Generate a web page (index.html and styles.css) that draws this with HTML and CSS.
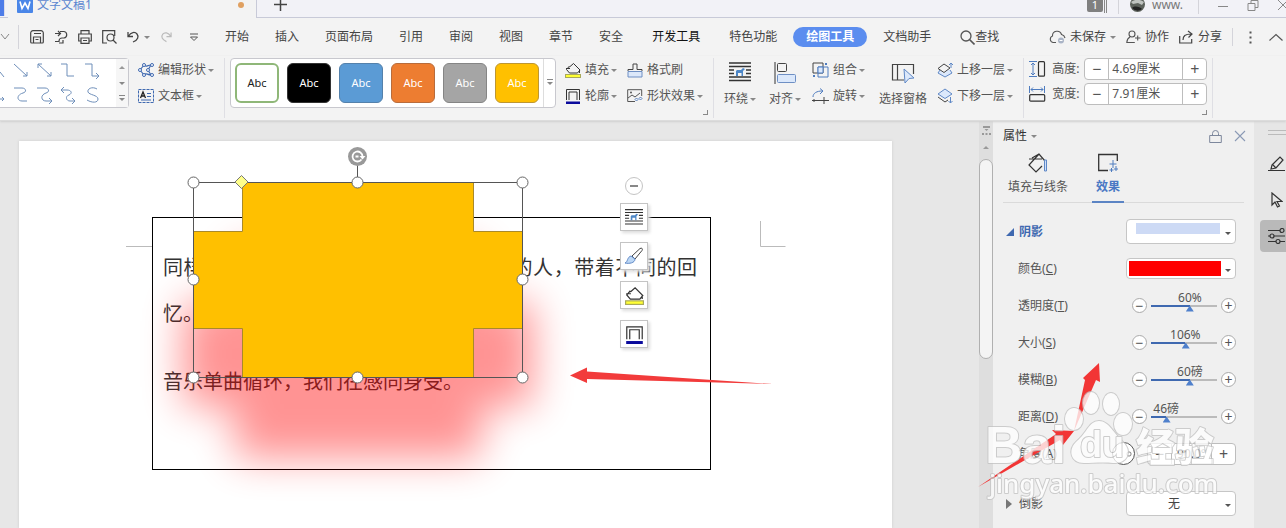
FILE: index.html
```html
<!DOCTYPE html>
<html lang="zh-CN">
<head>
<meta charset="utf-8">
<title>文字文稿1</title>
<link rel="stylesheet" href="styles.css">
</head>
<body>
<svg class="defs" aria-hidden="true">
  <symbol id="i-fill" viewBox="0 0 16 16"><path d="M4.500 4 1.500 7.500l3 3.500h8L15 8 8.500 1.500 4.500 5M1 6.500h4M14.500 8v3" fill="none" stroke="#333"/><rect x=".5" y="12.500" width="15" height="3" fill="#ff3" stroke="#a9a95a"/></symbol>
  <symbol id="i-line" viewBox="0 0 16 16"><path d="M1.500 12V1.500h13V12M4 12V4h8v8" fill="none" stroke="#333"/><path d="M1 13.500h14v2.500H1z" fill="#0a0a9c"/></symbol>
  <symbol id="i-wrap" viewBox="0 0 22 20"><path d="M0 1h22M0 4.500h22M0 8h5M17 8h5M0 11.500h5M17 11.500h5M0 15h22M0 18.500h22" stroke="#333" stroke-width="1.300"/><path d="M7 14v-5l1-1h4l2-2 2 1-2 2v5h-1.500v-3H9v3z" fill="#4d86c6"/></symbol>
</svg>

<header class="titlebar">
  <div class="home-edge"></div>
  <div class="doc-tab">
    <svg width="16" height="16" viewBox="0 0 16 16"><rect width="16" height="16" rx="1" fill="#4a86e8"/><path d="M3 4.500 5 11.500 8 6l3 5.500 2-7" fill="none" stroke="#fff" stroke-width="1.600"/></svg>
    <span>文字文稿1</span><i class="unsaved"></i>
  </div>
  <button class="new-tab" aria-label="新建"><svg width="13" height="13" viewBox="0 0 13 13"><path d="M6.500 0v13M0 6.500h13" stroke="#444" stroke-width="1.500"/></svg></button>
  <div class="title-right">
    <span class="count">1</span><i class="bars"></i><i class="vsep"></i>
    <svg class="avatar" width="15" height="15" viewBox="0 0 15 15"><circle cx="7.500" cy="7.500" r="7.500" fill="#5d625c"/><path d="M1 5c4-3 9-3 13 0l-2 3-4-2-5 1z" fill="#bfc3c0"/><path d="M2 11c3-3 8-1 10 1a7 7 0 0 1-10-1z" fill="#222"/></svg>
    <span class="user">www.</span><i class="vsep"></i>
    <button class="win" aria-label="最小化"><svg width="12" height="12" viewBox="0 0 12 12"><path d="M1 7.500h10" stroke="#888"/></svg></button>
    <button class="win" aria-label="还原"><svg width="12" height="12" viewBox="0 0 12 12"><path d="M1 4.500h7v7H1zM4 4V1.500h7v7H8" fill="none" stroke="#888"/></svg></button>
    <button class="win" aria-label="关闭"><svg width="12" height="12" viewBox="0 0 12 12"><path d="m1 1 10 10M11 1 1 11" stroke="#888"/></svg></button>
  </div>
</header>

<nav class="menubar">
  <div class="quick">
    <svg width="10" height="8" viewBox="0 0 10 8"><path d="m1 1 4 5 4-5" fill="none" stroke="#888"/></svg>
    <i class="vsep tall"></i>
    <button aria-label="保存"><svg width="14" height="14" viewBox="0 0 14 14"><path d="M.700 3V12a1 1 0 0 0 1 1H12.300a1 1 0 0 0 1-1V3a2.300 2.300 0 0 0-2.300-2.300H3a2.300 2.300 0 0 0-2.300 2.300zM3.500 13V7h7v6M4 3.500h7M5.500 9.500h3" fill="none" stroke="#444" stroke-width="1.200"/></svg></button>
    <button aria-label="输出"><svg width="14" height="14" viewBox="0 0 14 14"><path d="M1 3.500h6M4 1l2.500 2.500L4 6M6 1.500h4a3.300 3.300 0 0 1 0 6.500H8a3 3 0 0 0-3 3v.500H1M5 13h4V10" fill="none" stroke="#444" stroke-width="1.200"/></svg></button>
    <button aria-label="打印"><svg width="14" height="14" viewBox="0 0 14 14"><path d="M3 4V.700h8V4M3 11H.700V4h12.600v7H11M3 8h8v5.300H3zM5 10.500h4" fill="none" stroke="#444" stroke-width="1.200"/></svg></button>
    <button aria-label="打印预览"><svg width="15" height="14" viewBox="0 0 15 14"><path d="M5 13H.700V.700h12V6" fill="none" stroke="#444" stroke-width="1.200"/><circle cx="8.500" cy="7.500" r="3.500" fill="none" stroke="#444" stroke-width="1.200"/><path d="m11 10 3.500 3.500" stroke="#444" stroke-width="1.300"/></svg></button>
    <button class="with-caret" aria-label="撤销"><svg width="13" height="12" viewBox="0 0 13 12"><path d="M1 1v4.500h5M1.500 5C4 1 8 .500 10 3s1 6-4 8" fill="none" stroke="#444" stroke-width="1.300"/></svg><i class="caret"></i></button>
    <button aria-label="恢复"><svg width="12" height="12" viewBox="0 0 13 12"><path d="M12 1v4.500H7M11.500 5C9 1 5 .500 3 3s-1 6 4 8" fill="none" stroke="#bbb" stroke-width="1.300"/></svg></button>
    <button aria-label="更多"><svg width="8" height="9" viewBox="0 0 8 9"><path d="M0 1h8M.500 4 4 7.500 7.500 4z" fill="none" stroke="#555"/></svg></button>
  </div>
  <div class="menus">
    <button>开始</button><button>插入</button><button>页面布局</button><button>引用</button><button>审阅</button><button>视图</button><button>章节</button><button>安全</button>
  </div>
  <div class="menus wide">
    <button class="dark">开发工具</button><button>特色功能</button><button class="pill">绘图工具</button><button>文档助手</button>
    <button class="find"><svg width="15" height="15" viewBox="0 0 15 15"><circle cx="6" cy="6" r="5" fill="none" stroke="#555" stroke-width="1.300"/><path d="m9.500 9.500 5 5" stroke="#555" stroke-width="1.600"/></svg>查找</button>
  </div>
  <div class="share">
    <button><svg width="17" height="14" viewBox="0 0 17 14"><path d="M7 12.500H4A3.400 3.400 0 0 1 3.500 6a4.600 4.600 0 0 1 9-1.500c2 .500 3 1.500 3.500 3.500" fill="none" stroke="#555" stroke-width="1.100"/><circle cx="12" cy="10.500" r="3" fill="#aab4c6"/><path d="M10.500 10.500h3" stroke="#fff"/></svg>未保存<i class="caret"></i></button>
    <button><svg width="15" height="14" viewBox="0 0 15 14"><circle cx="6" cy="4" r="3" fill="none" stroke="#555" stroke-width="1.100"/><path d="M4 7C2 8 1 9 .800 12.500h8M9 8h5.500M11.700 5.500v5" fill="none" stroke="#555" stroke-width="1.100"/></svg>协作</button>
    <button><svg width="15" height="14" viewBox="0 0 15 14"><path d="M.700 6v7h12V9M4 10c0-4 2-6 8-6M9 1l4 3-3.500 3.500" fill="none" stroke="#444" stroke-width="1.200"/></svg>分享</button>
    <i class="vsep"></i>
    <button aria-label="更多选项"><svg width="3" height="13" viewBox="0 0 3 13"><path d="M.500.500h2v2h-2zM.500 5.500h2v2h-2zM.500 10.500h2v2h-2z" fill="#555"/></svg></button>
    <button class="collapse" aria-label="收起"><svg width="14" height="8" viewBox="0 0 14 8"><path d="m.500 7.500 6.500-6 6.500 6" fill="none" stroke="#555" stroke-width="1.200"/></svg></button>
  </div>
</nav>

<section class="ribbon">
  <div class="gallery lines">
    <svg width="116" height="48" viewBox="0 0 116 48" fill="none" stroke="#6f8fba"><path d="M0 13l4 5M0 40h4m-2-2 2 2-2 2M14 5l13 12m-4 0h4v-4M38 5l13 12m-4 0h4v-4M38 9V5h4M61 5h6v12h7M85 5h7v12h7m-3-3 3 3-3 3M14 29h8c4 0 5 4 1 5-7 2-6 8-1 8h5M37 29h8c4 0 5 4 1 5-6 2-5 8 0 8h6m-3-3 3 3-3 3M62 31h5c4 0 6 3 2 5-4 1-3 6 1 6h5m-3-3 3 3-3 3M64 28l-3 3 3 3M97 30c-5-3-10 0-9 3s10 3 10 7-6 4-11 1"/></svg>
    <div class="gallery-nav"><i class="caret up"></i><i class="caret"></i><i class="caret lined"></i></div>
  </div>
  <div class="rows edit">
    <button><svg width="16" height="14" viewBox="0 0 16 14"><path d="M2 7 6 2M2 7l4 5M6 2c2 3 3 0 7 0M6 12c2-3 3 0 7 0M13 2l-3 5 3 5" fill="none" stroke="#3f69b0" stroke-width="1.200"/><g fill="#fff" stroke="#3f69b0"><circle cx="2" cy="7" r="1.500"/><circle cx="6" cy="2" r="1.500"/><circle cx="6" cy="12" r="1.500"/><circle cx="14" cy="2" r="1.500"/><circle cx="14" cy="12" r="1.500"/><circle cx="10" cy="7" r="1.500"/></g></svg>编辑形状<i class="caret"></i></button>
    <button><svg width="16" height="14" viewBox="0 0 16 14"><rect x=".500" y=".500" width="15" height="13" fill="none" stroke="#3f69b0" stroke-dasharray="3 1"/><path d="m2.500 9 2.500-6 2.500 6M3.500 7h3" fill="none" stroke="#222" stroke-width="1.300"/><path d="M9 4.500h4M9 7.500h4M3 11h10" stroke="#3f69b0"/></svg>文本框<i class="caret"></i></button>
  </div>
  <i class="rsep"></i>
  <div class="gallery styles">
    <div class="swatches">
      <button class="sw outline">Abc</button><button class="sw black">Abc</button><button class="sw blue">Abc</button><button class="sw orange">Abc</button><button class="sw gray">Abc</button><button class="sw gold">Abc</button>
    </div>
    <div class="more"><i class="caret lined"></i></div>
  </div>
  <div class="rows fills">
    <button><svg width="16" height="16"><use href="#i-fill"/></svg>填充<i class="caret"></i></button>
    <button><svg width="16" height="16"><use href="#i-line"/></svg>轮廓<i class="caret"></i></button>
  </div>
  <div class="rows effects">
    <button><svg width="16" height="15" viewBox="0 0 16 15"><path d="M1 8.500h14v5.500H1z" fill="#dce8fa" stroke="#6e8fc4"/><path d="M1 8V6.500h5V1h4v5.500h5V8" fill="none" stroke="#444"/></svg>格式刷</button>
    <button><svg width="16" height="14" viewBox="0 0 16 14"><path d="M8 12.500H.700V.700h14V7M1 9l4-3 3 2 5-4" fill="none" stroke="#555"/><circle cx="4" cy="3.500" r="1" fill="#555"/><path d="m9.500 9 1.500 1.500L9.500 12 8 10.500zM13.500 8 15 9.500 13.500 11 12 9.500z" fill="none" stroke="#5a82c0"/></svg>形状效果<i class="caret"></i></button>
  </div>
  <i class="corner"></i>
  <i class="rsep"></i>
  <button class="big"><svg width="22" height="20"><use href="#i-wrap"/></svg><span>环绕<i class="caret"></i></span></button>
  <button class="big"><svg width="22" height="22" viewBox="0 0 22 22"><path d="M1 0v22" stroke="#333"/><rect x="3.500" y="1.500" width="9" height="8" rx="1" fill="none" stroke="#444"/><rect x="3.500" y="12.500" width="18" height="8" rx="1" fill="#dbe8fb" stroke="#6e8fc4"/></svg><span>对齐<i class="caret"></i></span></button>
  <div class="rows group">
    <button><svg width="17" height="16" viewBox="0 0 17 16"><path d="M1 1h10v10H1z" fill="none" stroke="#444"/><path d="M6 5h10v10H6z" fill="none" stroke="#4f7cbf"/><path d="M6 5h5v6H6z" fill="#dbe8fb" stroke="#4f7cbf"/><path d="M13 1h2v2h-2zM1 13h2v2H1z" fill="#4f7cbf"/></svg>组合<i class="caret"></i></button>
    <button><svg width="17" height="16" viewBox="0 0 17 16"><path d="M1 9c0-4 4-6 9-6M8 .500 11 3 8 6" fill="none" stroke="#4f7cbf"/><path d="M0 12.500h17M12 9v7M2 11v3" stroke="#444"/></svg>旋转<i class="caret"></i></button>
  </div>
  <button class="big pane"><svg width="24" height="22" viewBox="0 0 24 22"><path d="M13 18H1.500V2.500h21V12M6.500 3v15" fill="none" stroke="#444" stroke-width="1.200"/><path d="m13 7 10 9-5 .500L14 21z" fill="#dbe8fb" stroke="#5f88c6"/></svg><span>选择窗格</span></button>
  <div class="rows layer">
    <button><svg width="16" height="16" viewBox="0 0 16 16"><path d="m3 8-2 3 7 4 7-4-2-3" fill="#dbe8fb" stroke="#5f88c6"/><path d="m7 2 6 4-6 4.500L1 6.500z" fill="#f3f3f3" stroke="#444"/><path d="M14 6V1m-2 2 2-2 2 2" fill="none" stroke="#5f88c6"/></svg>上移一层<i class="caret"></i></button>
    <button><svg width="16" height="16" viewBox="0 0 16 16"><path d="m1 9 7 5 3-2" fill="none" stroke="#444"/><path d="m8 1 7 5-7 4.500L1 6z" fill="#dbe8fb" stroke="#5f88c6"/><path d="M13.500 9v6m-2-2 2 2 2-2" fill="none" stroke="#5f88c6"/></svg>下移一层<i class="caret"></i></button>
  </div>
  <i class="rsep"></i>
  <div class="sizes">
    <label for="h"><svg width="17" height="16" viewBox="0 0 17 16"><path d="M0 .500h8M0 15.500h8M4 2v12M2 4l2-2 2 2M2 12l2 2 2-2" fill="none" stroke="#4f7cbf"/><rect x="9.500" y=".700" width="6" height="14.500" rx="1" fill="none" stroke="#333" stroke-width="1.200"/></svg>高度:</label>
    <div class="spin"><button aria-label="减小高度">−</button><input id="h" value="4.69厘米"><button aria-label="增大高度">+</button></div>
    <label for="w"><svg width="17" height="16" viewBox="0 0 17 16"><path d="M.500 0v7M15.500 0v7M2 3.500h12M4 1.500l-2 2 2 2M12 1.500l2 2-2 2" fill="none" stroke="#4f7cbf"/><rect x=".700" y="8.700" width="15" height="6.500" rx="1" fill="none" stroke="#333" stroke-width="1.200"/></svg>宽度:</label>
    <div class="spin"><button aria-label="减小宽度">−</button><input id="w" value="7.91厘米"><button aria-label="增大宽度">+</button></div>
    <i class="corner"></i>
  </div>
  <i class="rsep last"></i>
</section>

<main class="workspace">
  <div class="canvas">
    <article class="page">
      <div class="textbox">
        <p>同样的旋律，同样的歌词，只是不一样的人，带着不同的回忆。</p>
        <p>音乐单曲循环，我们在感同身受。</p>
      </div>
      <svg class="drawing" width="873" height="387" viewBox="19 141 873 387">
        <defs><filter id="soft" x="-30%" y="-40%" width="160%" height="180%"><feGaussianBlur stdDeviation="20"/></filter></defs>
        <path d="M126 246.500h26M760.500 221v25.500h25" fill="none" stroke="#bbb"/>
        <path d="M235 250h246v52h52v104h-52v52H235v-52h-52V302h52z" fill="#f00" opacity=".42" filter="url(#soft)"/>
        <path d="M242.500 182.500h231v49h49v97h-49v49h-231v-49h-49v-97h49z" fill="#ffc000" stroke="#a98a2a"/>
        <path d="M193.500 182.500h329v195h-329zM357.500 165v17" fill="none" stroke="#555"/>
        <circle cx="357.500" cy="156.500" r="9.500" fill="#999"/>
        <path d="M361.500 159.500a5 5 0 1 1 1-3M355.500 156.500h3" fill="none" stroke="#fff" stroke-width="1.800"/>
        <path d="M359.500 156h6l-3 3.500z" fill="#fff"/>
        <path d="m241.500 175.500 6.500 6.500-6.500 6.500-6.500-6.500z" fill="#ffff8a" stroke="#777"/>
        <g fill="#fff" stroke="#666"><circle cx="193.500" cy="182.500" r="5.500"/><circle cx="357.500" cy="182.500" r="5.500"/><circle cx="522.500" cy="182.500" r="5.500"/><circle cx="193.500" cy="279.500" r="5.500"/><circle cx="522.500" cy="279.500" r="5.500"/><circle cx="193.500" cy="377.500" r="5.500"/><circle cx="357.500" cy="377.500" r="5.500"/><circle cx="522.500" cy="377.500" r="5.500"/></g>
        <path d="m570 375.500 17-8v4l186 12.500-186-5v4z" fill="#f23b3b"/>
      </svg>
      <div class="float-tools">
        <button class="round" aria-label="收起"><svg width="8" height="2"><path d="M0 1h8" stroke="#888" stroke-width="2"/></svg></button>
        <button aria-label="环绕"><svg width="18" height="18"><use href="#i-wrap"/></svg></button>
        <button aria-label="格式刷"><svg width="20" height="18" viewBox="0 0 20 18"><path d="M8 9 16 1.500c2-1 3 .500 2 2L11 12z" fill="#fff" stroke="#444"/><path d="M1 16c3-1 2-6 6-7l4 3c0 4-6 5-10 4z" fill="#bcd7f5" stroke="#5f88c6"/></svg></button>
        <button aria-label="填充"><svg width="19" height="19"><use href="#i-fill"/></svg></button>
        <button aria-label="轮廓"><svg width="19" height="19"><use href="#i-line"/></svg></button>
      </div>
    </article>
  </div>
  <div class="scroll"><svg width="9" height="10" viewBox="0 0 9 10"><path d="M1 0h7v2H1zM2.500 3h4L4.500 5zM0 7h2v2H0zM3.500 7h2v2h-2zM7 7h2v2H7z" fill="#999"/></svg><i class="caret up"></i><div class="thumb"></div></div>

  <aside class="panel">
    <div class="panel-head"><strong>属性</strong><i class="caret"></i>
      <svg width="13" height="13" viewBox="0 0 13 13"><path d="M.700 5.500h11.600v7H.700zM3.500 5V3.500a3 3 0 0 1 6 0V5" fill="none" stroke="#7d879c"/></svg>
      <svg width="12" height="12" viewBox="0 0 12 12"><path d="m1 1 10 10M11 1 1 11" stroke="#8b9ab5" stroke-width="1.100"/></svg>
    </div>
    <div class="panel-tabs">
      <button><svg width="20" height="20" viewBox="0 0 20 20"><path d="M4 5 11 1l6 7M11 1 1 12l7 7 6-6M1 6h13" fill="none" stroke="#333" stroke-width="1.200"/><path d="M16.500 7h2v11h-2z" fill="#cfe0fa" stroke="#5f88c6"/></svg><span>填充与线条</span></button>
      <button class="active"><svg width="20" height="20" viewBox="0 0 20 20"><path d="M10 17.500H.700V1.500h18.600V8" fill="none" stroke="#333" stroke-width="1.300"/><path d="M15 7v8M11.500 11h7M13.500 15v4M11.500 17h4M18 13v5M16 16h4" stroke="#4f7cbf"/></svg><span>效果</span></button>
    </div>
    <div class="prop section"><label for="shadow"><i class="open"></i>阴影</label><div class="pick"><select id="shadow" class="shadow"><option></option></select></div></div>
    <div class="prop"><label for="color">颜色(<u>C</u>)</label><div class="pick small"><select id="color" class="color"><option></option></select></div></div>
    <div class="prop"><label for="s1">透明度(<u>T</u>)</label><div class="slide" style="--v:59%"><button aria-label="减小">−</button><div class="track"><output for="s1">60%</output><input id="s1" type="range" value="60"></div><button aria-label="增大">+</button></div></div>
    <div class="prop"><label for="s2">大小(<u>S</u>)</label><div class="slide" style="--v:52%"><button aria-label="减小">−</button><div class="track"><output for="s2">106%</output><input id="s2" type="range" max="200" value="106"></div><button aria-label="增大">+</button></div></div>
    <div class="prop"><label for="s3">模糊(<u>B</u>)</label><div class="slide" style="--v:59%"><button aria-label="减小">−</button><div class="track"><output for="s3">60磅</output><input id="s3" type="range" value="60"></div><button aria-label="增大">+</button></div></div>
    <div class="prop"><label for="s4">距离(<u>D</u>)</label><div class="slide" style="--v:23%"><button aria-label="减小">−</button><div class="track"><output for="s4">46磅</output><input id="s4" type="range" max="200" value="40"></div><button aria-label="增大">+</button></div></div>
    <div class="prop"><label for="angle">角度(<u>A</u>)</label><i class="dial"></i><div class="spin angle"><button aria-label="减小角度">−</button><input id="angle" value="90.0°"><button aria-label="增大角度">+</button></div></div>
    <div class="prop section reflect"><label for="reflect"><i class="closed"></i>倒影</label><div class="pick"><select id="reflect"><option>无</option></select></div></div>
  </aside>

  <div class="rail">
    <i class="grip"></i>
    <button aria-label="样式"><svg width="17" height="16" viewBox="0 0 17 16"><path d="m4 9 8-8 3 3-7 8-5 1zM0 14.500h17M5 9l3 3" fill="none" stroke="#333" stroke-width="1.200"/></svg></button>
    <button aria-label="选择"><svg width="12" height="16" viewBox="0 0 12 16"><path d="M1 1v12l3-3 2.500 5 2-1L6 9.500h5z" fill="none" stroke="#333" stroke-width="1.200"/></svg></button>
    <button class="on" aria-label="属性"><svg width="17" height="16" viewBox="0 0 17 16"><path d="M0 2.500h12M0 8h2M6 8h11M0 13.500h8M12 13.500h5" stroke="#333" stroke-width="1.200"/><g fill="none" stroke="#333" stroke-width="1.200"><circle cx="14" cy="2.500" r="2"/><circle cx="4" cy="8" r="2"/><circle cx="10" cy="13.500" r="2"/></g></svg></button>
  </div>

  <svg class="marks" width="310" height="180" viewBox="976 350 310 180">
    <path d="m978 487 78-53-4-4 22 1-11 14-3-5z" fill="#f23535"/>
    <path d="m1074 431 11-51-2-2 16-15 1 19-4-2z" fill="#f23535"/>
    <g class="wm">
      <text class="wm-logo" x="985" y="463">Bai</text>
      <ellipse cx="1074" cy="419" rx="9" ry="11"/><ellipse cx="1091" cy="403" rx="8" ry="11"/><ellipse cx="1111" cy="404" rx="8" ry="11"/><ellipse cx="1123" cy="424" rx="9" ry="11"/>
      <path d="M1099 421c-10 0-12 12-22 20-10 9-6 22 7 22 8 0 20-1 29 0 14 1 20-11 10-21-9-8-14-21-24-21z"/>
      <text class="wm-du" x="1080" y="457">du</text>
      <text class="wm-cn" x="1136" y="461">经验</text>
      <text class="wm-url" x="989" y="493">jingyan.baidu.com</text>
    </g>
  </svg>
</main>
</body>
</html>
```

FILE: styles.css
```css
* { box-sizing: border-box; }
body {
  margin: 0;
  height: 100vh;
  display: flex;
  flex-direction: column;
  overflow: hidden;
  background: #e7e7e7;
  color: #555;
  font: 12px/16px "Noto Sans", "Noto Sans CJK SC", sans-serif;
}
button {
  margin: 0;
  padding: 0;
  border: 0;
  background: none;
  color: inherit;
  font: inherit;
  white-space: nowrap;
  display: flex;
  align-items: center;
}
svg { flex: none; }
.defs { position: absolute; width: 0; height: 0; }
.caret {
  flex: none;
  border: 3px solid transparent;
  border-top-color: #888;
  border-bottom-width: 0;
}
.caret.up { border-width: 0 3px 3px; border-bottom-color: #999; }
.caret.lined { position: relative; }
.caret.lined::before {
  content: "";
  position: absolute;
  left: -3px;
  top: -6px;
  width: 6px;
  height: 1px;
  background: #888;
}
.vsep { width: 1px; height: 18px; background: #d4d4da; }
.vsep.tall { height: 24px; }

/* title bar */
.titlebar {
  flex: none;
  height: 18px;
  display: flex;
  background: #f2f2f7;
  border-bottom: 1px solid #c8cad8;
}
.home-edge { width: 8px; height: 16px; background: linear-gradient(90deg, #4d7ce8 4px, #c8cad8 4px, #f2f2f7 5px); }
.doc-tab {
  width: 249px;
  height: 18px;
  padding: 0 12px 8px 9px;
  display: flex;
  align-items: center;
  gap: 4px;
  background: #f3f3f3;
  border-right: 1px solid #c8cad8;
  color: #5b86d0;
}
.unsaved { width: 6px; height: 6px; margin-left: auto; border-radius: 50%; background: #e0a060; }
.new-tab { width: 46px; height: 8px; justify-content: center; }
.title-right {
  margin-left: auto;
  height: 9px;
  display: flex;
  align-items: center;
  gap: 11px;
  color: #777;
}
.count { padding: 0 5px; line-height: 14px; background: #808080; color: #fff; border-radius: 2px; font-size: 11px; }
.bars { width: 3px; height: 16px; margin-left: -10px; border: 1px solid #888; border-width: 0 1px; }
.user { margin-left: -4px; margin-right: 4px; }
.win { margin-left: 7px; }
.win + .win { margin-left: 7px; }
.win:last-child { margin-right: -3px; }

/* menu bar */
.menubar {
  flex: none;
  height: 38px;
  display: flex;
  align-items: center;
  background: #f3f3f3;
  color: #444;
}
.quick { width: 225px; display: flex; align-items: center; gap: 11px; }
.quick .vsep { margin: 0 0 0 -3px; }
.quick .with-caret { gap: 4px; }
.quick button:nth-of-type(n + 2) { margin-left: -1px; }
.quick button:last-child { margin-left: 7px; }
.menus { display: flex; gap: 26px; }
.menus.wide { margin-left: 29px; gap: 29px; }
.dark { color: #111; }
.menus .pill {
  margin: 0 -13px;
  padding: 2px 13px;
  border-radius: 10px;
  background: #5b8def;
  color: #fff;
  font-weight: bold;
}
.share { margin-left: auto; display: flex; align-items: center; gap: 10px; }
.share button { gap: 4px; }
.share .vsep + button { margin-left: 6px; }
.share .collapse { margin: 0 3px 0 7px; }

/* ribbon */
.ribbon {
  flex: none;
  height: 65px;
  display: flex;
  align-items: flex-start;
  padding-top: 2px;
  background: #f3f3f3;
  border-bottom: 1px solid #dcdcdc;
  box-shadow: 0 1px 2px #cfcfcf;
  z-index: 1;
}
.ribbon button { gap: 4px; }
.rsep { width: 1px; height: 60px; background: #dfdfe4; }
.gallery {
  height: 50px;
  display: flex;
  background: #fff;
  border: 1px solid #c8c8ce;
  border-radius: 4px;
}
.lines { border-left: 0; border-radius: 0 4px 4px 0; }
.gallery-nav {
  width: 12px;
  display: flex;
  flex-direction: column;
  justify-content: space-around;
  align-items: center;
  background: #f6f6f6;
}
.rows { height: 50px; display: grid; align-content: space-between; }
.rows button { height: 24px; }
.rows .caret { margin-left: -2px; }
.edit { margin: 0 10px 0 9px; }
.styles { margin-left: 5px; }
.swatches { display: flex; gap: 8px; padding: 4px; }
.sw {
  width: 44px;
  height: 40px;
  justify-content: center;
  border: 1px solid;
  border-radius: 6px;
  color: #fff;
  font-size: 11px;
}
.outline { background: #fff; border: 2px solid #8fb778; color: #222; }
.black { background: #000; border-color: #333; }
.blue { background: #5b9bd5; border-color: #5481ab; }
.orange { background: #ed7d31; border-color: #b86c3c; }
.gray { background: #a5a5a5; border-color: #858585; }
.gold { background: #ffc000; border-color: #bd9632; }
.more { width: 12px; display: grid; place-content: center; border-left: 1px solid #ddd; }
.fills { margin-left: 9px; }
.effects { margin-left: 10px; }
.corner { width: 5px; height: 5px; margin: 52px 5px 0 0; border: 1px solid #888; border-width: 0 1px 1px 0; }
.ribbon .big { height: 50px; margin-left: 10px; flex-direction: column; justify-content: space-between; padding-top: 4px; }
.ribbon .big + .big { margin-left: 13px; }
.big span { display: flex; align-items: center; gap: 2px; height: 18px; }
.group { margin-left: 11px; }
.ribbon .pane { margin-left: 14px; }
.layer { margin: 0 10px; }
.sizes { margin: 0 5px; display: grid; grid-template-columns: auto 123px; gap: 3px 5px; }
.sizes label { display: flex; align-items: center; gap: 6px; }
.sizes .corner { grid-column: 2; justify-self: end; margin: 2px 0 0; }
.spin {
  height: 22px;
  display: flex;
  background: #fff;
  border: 1px solid #bdbdbd;
  border-radius: 4px;
}
.spin button { width: 23px; flex: none; justify-content: center; font-size: 16px; }
.spin input {
  flex: 1;
  min-width: 0;
  padding: 0 3px;
  border: 1px solid #bdbdbd;
  border-width: 0 1px;
  background: none;
  color: inherit;
  font: inherit;
}

/* document */
.workspace { flex: 1; min-height: 0; display: flex; position: relative; }
.canvas { flex: 1; min-width: 0; display: flex; padding: 20px 87px 0 19px; }
.page { flex: 1; min-width: 0; position: relative; background: #fff; box-shadow: 0 0 3px #ccc; }
.textbox {
  min-height: 253px;
  margin: 76px 181px 0 133px;
  padding: 27px 13px 0 10px;
  border: 1px solid #000;
  color: #333;
  font-size: 20px;
  line-height: 46px;
}
.textbox p { margin: 0 0 22px; text-align: justify; }
.drawing { position: absolute; left: 0; top: 0; }
.float-tools {
  position: absolute;
  left: 601px;
  top: 36px;
  display: grid;
  justify-items: center;
  gap: 11px;
}
.float-tools button {
  width: 28px;
  height: 28px;
  justify-content: center;
  background: #fff;
  border: 1px solid #c4c4c4;
  box-shadow: 2px 2px 3px #ddd;
}
.float-tools .round { width: 18px; height: 18px; margin-bottom: -3px; border-radius: 50%; box-shadow: none; }
.scroll {
  width: 14px;
  display: flex;
  flex-direction: column;
  align-items: center;
  gap: 10px;
  padding-top: 5px;
  background: #dedede;
}
.thumb { width: 14px; height: 200px; background: #f4f4f4; border: 1px solid #b0b0b0; border-radius: 7px; }

/* property panel */
.panel { width: 261px; padding: 6px 10px 0; background: #f0f0f0; }
.panel-head { height: 18px; display: flex; align-items: center; gap: 4px; }
.panel-head strong { font-weight: normal; color: #333; }
.panel-head svg:first-of-type { margin-left: auto; margin-right: 8px; }
.panel-head svg:last-of-type { margin-right: -2px; }
.panel-tabs { height: 58px; padding: 8px 5px 0; display: flex; gap: 24px; border-bottom: 1px solid #dadada; }
.panel-tabs button { height: 50px; flex-direction: column; gap: 6px; }
.panel-tabs .active { padding: 0 4px; color: #4a78c4; border-bottom: 2px solid #5b84c4; font-weight: bold; }
.prop { height: 37px; padding: 0 8px 0 15px; display: flex; align-items: center; }
.prop label { margin-right: auto; display: flex; align-items: center; white-space: pre; }
.prop.section { padding-left: 3px; }
.panel-tabs + .section { margin-top: 10px; }
.panel-tabs + .section label { color: #3f69b0; font-weight: bold; }
.reflect { margin-top: 13px; }
.open { margin-right: 5px; border: 4px solid; border-color: transparent #3f69b0 #3f69b0 transparent; }
.closed { margin-right: 7px; border: 5px solid transparent; border-left: 6px solid #777; border-right: 0; }
.pick { position: relative; width: 110px; height: 25px; }
.pick.small { height: 21px; }
.pick::after {
  content: "";
  position: absolute;
  right: 5px;
  top: 50%;
  border: 3px solid transparent;
  border-top-color: #555;
  border-bottom: 0;
}
.pick select {
  appearance: none;
  width: 100%;
  height: 100%;
  padding: 0 14px 0 0;
  border: 1px solid #c6c6c6;
  border-radius: 4px;
  background: #fff;
  color: #444;
  font: inherit;
  text-align: center;
  text-align-last: center;
}
.pick .shadow { background: linear-gradient(#cddaf5, #cddaf5) 9px 3px / 84px 11px no-repeat #fff; }
.pick .color { background: linear-gradient(#f00, #f00) 2px 2px / 92px 15px no-repeat #fff; }
.slide { display: flex; align-items: center; gap: 4px; }
.slide button {
  width: 15px;
  height: 15px;
  justify-content: center;
  border: 1px solid #aaa;
  border-radius: 50%;
  background: #fff;
  font-size: 14px;
  line-height: 12px;
}
.track { position: relative; width: 66px; height: 16px; }
.track output { position: absolute; left: var(--v); bottom: 8px; transform: translateX(-50%); white-space: nowrap; }
.track input {
  appearance: none;
  display: block;
  width: 100%;
  height: 16px;
  margin: 0;
  background: linear-gradient(90deg, #3f69b0 var(--v), #bbb var(--v)) 0 7px / 100% 2px no-repeat;
}
.track input::-webkit-slider-thumb {
  appearance: none;
  width: 8px;
  height: 6px;
  margin-top: 6px;
  background: #4f80cc;
  clip-path: polygon(50% 0, 100% 100%, 0 100%);
}
.dial { width: 23px; height: 23px; margin-right: 12px; border: 1px solid #555; border-radius: 50%; background: radial-gradient(circle at 16px 11px, #fff 1px, #888 2px, #fff 3px); }
.angle { width: 89px; }
.angle input { text-align: center; }

/* right rail */
.rail {
  width: 32px;
  padding-top: 9px;
  display: flex;
  flex-direction: column;
  align-items: flex-end;
  gap: 4px;
  background: #e6e6e6;
}
.grip { width: 18px; height: 5px; border: 1px solid #bbb; border-width: 1px 0; margin-bottom: 9px; }
.rail button { width: 26px; height: 32px; justify-content: center; padding-left: 7px; }
.rail .on { border-radius: 4px 0 0 4px; background: #b9b9b9; }

/* annotation and watermark */
.marks { position: absolute; right: 0; top: 229px; pointer-events: none; }
.wm { fill: #fff; stroke: #c2c2c2; stroke-width: 2px; stroke-linejoin: round; paint-order: stroke; opacity: .78; }
.wm-logo { font: bold 52px "Liberation Sans", sans-serif; }
.wm-du { font: bold 36px "Liberation Sans", sans-serif; }
.wm-cn { font: 900 39px "Noto Sans CJK SC", sans-serif; }
.wm-url { font: 500 26px "Noto Sans", sans-serif; }
```
